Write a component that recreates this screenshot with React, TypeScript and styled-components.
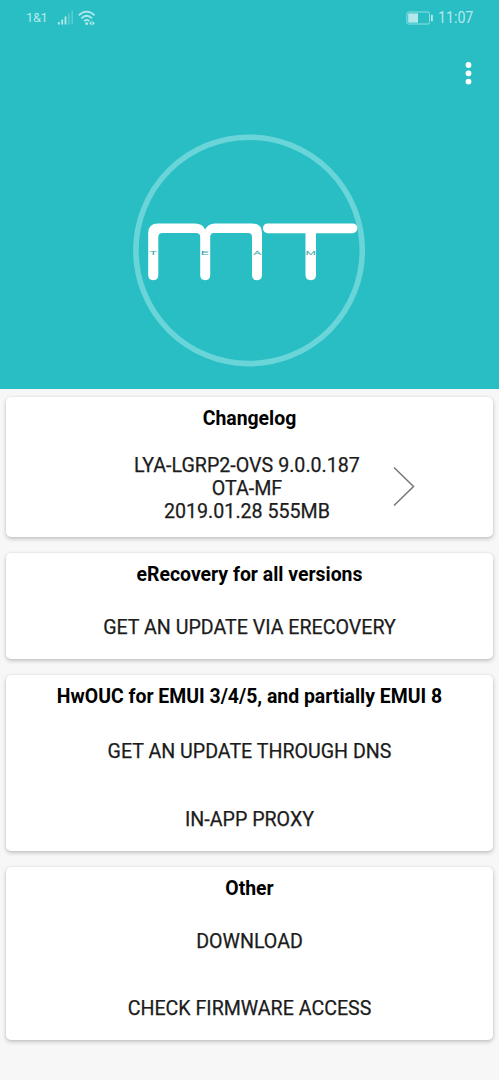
import React from 'react';
import styled, { createGlobalStyle } from 'styled-components';

const GlobalStyle = createGlobalStyle`
  * { box-sizing: border-box; }
  body {
    margin: 0;
    background: #f7f7f7;
    font-family: Roboto, "Liberation Sans", sans-serif;
  }
`;

const Screen = styled.main`
  display: flex;
  flex-direction: column;
  width: 499px;
  height: 1080px;
  overflow: hidden;
  background: #f7f7f7;
`;

const Hero = styled.header`
  display: flex;
  flex-direction: column;
  height: 389px;
  flex: none;
  background: #28bec4;
`;

const StatusBar = styled.div`
  display: flex;
  align-items: center;
  justify-content: space-between;
  height: 36px;
  padding: 0 26px 0 26px;
  color: #b4e9eb;
`;

const StatusGroup = styled.div`
  display: flex;
  align-items: center;
`;

const Carrier = styled.span`
  width: 32px;
  font-size: 12.8px;
  line-height: 16px;
  letter-spacing: -0.3px;
  white-space: nowrap;
`;

const Clock = styled.span`
  margin-left: 4px;
  width: 35px;
  font-size: 16.5px;
  font-weight: 400;
  line-height: 18px;
  white-space: nowrap;
  transform: scaleX(0.86);
  transform-origin: left center;
`;

const Toolbar = styled.div`
  display: flex;
  justify-content: flex-end;
  height: 74px;
  padding: 22px 20px 0 0;
`;

const MenuButton = styled.button`
  display: flex;
  width: 22px;
  height: 30px;
  padding: 0;
  border: 0;
  background: none;
`;

const LogoArea = styled.div`
  display: flex;
  justify-content: center;
  padding-top: 20px;
`;

const CardList = styled.div`
  display: flex;
  flex-direction: column;
  gap: 16px;
  padding: 8px 6px 0;
`;

const Card = styled.section<{ $height: number }>`
  display: flex;
  flex-direction: column;
  height: ${(p) => p.$height}px;
  padding-top: 10px;
  border-radius: 5px;
  background: #fff;
  box-shadow: 0 2px 4px rgba(0, 0, 0, 0.2), 0 0 3px rgba(0, 0, 0, 0.08);
`;

const Title = styled.h2`
  margin: 0;
  font-size: 19.42px;
  font-weight: 700;
  line-height: 23px;
  text-align: center;
  color: #000;
`;

const Action = styled.button<{ $top: number }>`
  margin: ${(p) => p.$top}px 0 0;
  padding: 0;
  border: 0;
  background: none;
  font: 400 19.62px/23px Roboto, "Liberation Sans", sans-serif;
  -webkit-text-stroke: 0.25px #1c1c1c;
  color: #1c1c1c;
  text-align: center;
`;

const ReleaseRow = styled.div`
  display: grid;
  grid-template-columns: 106px 270px auto;
  align-items: center;
  margin-top: 25px;
`;

const Release = styled.p`
  grid-column: 2;
  margin: 0;
  font-size: 19.65px;
  -webkit-text-stroke: 0.25px #1c1c1c;
  line-height: 22.8px;
  text-align: center;
  color: #1c1c1c;
`;

const Wifi = styled.svg`
  margin-left: 4px;
`;

const Chevron = styled.svg`
  margin: 0 0 4px 10px;
`;

const SignalIcon = () => (
  <svg width="16" height="16" viewBox="0 0 16 16" fill="#b4e9eb">
    <rect x="0" y="12" width="1.8" height="2.5" />
    <rect x="3.3" y="9.5" width="1.8" height="5" />
    <rect x="6.6" y="6.5" width="1.8" height="8" />
    <rect x="10" y="3.5" width="1.6" height="11" opacity=".35" />
    <rect x="13.4" y="0.5" width="1.6" height="14" opacity=".35" />
  </svg>
);

const WifiIcon = () => (
  <Wifi width="18" height="16" viewBox="0 0 18 16" fill="none" stroke="#b4e9eb" strokeWidth="1.7">
    <path d="M.8 5.3Q8.7-2.2 16.6 5.3M3.4 8.3Q8.7 3.2 14 8.3M6 11.2Q8.7 8.5 11.4 11.2" />
    <circle cx="8.7" cy="13.7" r="1.4" fill="#b4e9eb" stroke="none" />
    <path d="M13.4 11 11.2 13.2 13.4 15.4zM14.4 11 16.8 13.2 14.4 15.4z" fill="#b4e9eb" stroke="none" />
  </Wifi>
);

const BatteryIcon = () => (
  <svg width="28" height="14" viewBox="0 0 28 14">
    <rect x=".9" y="1" width="22.6" height="12" rx="1.5" fill="none" stroke="#8fdfe2" />
    <rect x="2.2" y="2.4" width="9.8" height="9.2" fill="#b4e9eb" />
    <rect x="25" y="3.7" width="1.8" height="6.6" rx=".5" fill="#b4e9eb" />
  </svg>
);

const MoreIcon = () => (
  <svg width="22" height="30" viewBox="0 0 22 30" fill="#fff">
    <circle cx="11.5" cy="7" r="2.9" />
    <circle cx="11.5" cy="15.3" r="2.9" />
    <circle cx="11.5" cy="23.6" r="2.9" />
  </svg>
);

const teamLetters = [
  { letter: 'T', x: 153.3, width: 8 },
  { letter: 'E', x: 204.8, width: 8.5 },
  { letter: 'A', x: 257.2, width: 8.5 },
  { letter: 'M', x: 310.8, width: 10.5 },
];

const Logo = () => (
  <svg width="239" height="240" viewBox="130 130 239 240">
    <circle cx="249.1" cy="250.4" r="113.2" fill="none" stroke="#69d5d9" strokeWidth="5.6" />
    <g fill="#fff">
      <path d="M148.2 275V233Q148.2 223.4 158 223.4H195Q202.5 223.4 205.2 229.5Q208 223.4 215 223.4H252Q262 223.4 262 233V275Q262 280.2 257 280.2Q252 280.2 252 275V237Q252 233 248 233H214Q210.2 233 210.2 237V275Q210.2 280.2 205.2 280.2Q200.2 280.2 200.2 275V237Q200.2 233 196 233H162.5Q158.3 233 158.3 237V275Q158.3 280.2 153.25 280.2Q148.2 280.2 148.2 275Z" />
      <rect x="263" y="223.4" width="94.3" height="9.8" rx="4.6" />
      <path d="M305.5 230H316V275Q316 280.2 310.75 280.2Q305.5 280.2 305.5 275Z" />
    </g>
    {teamLetters.map(({ letter, x, width }) => (
      <text
        key={letter}
        x={x - width / 2}
        y="254.8"
        fontFamily="Roboto, sans-serif"
        fontSize="6"
        fill="#3fa9ae"
        textLength={width}
        lengthAdjust="spacingAndGlyphs"
      >
        {letter}
      </text>
    ))}
  </svg>
);

const ChevronIcon = () => (
  <Chevron width="24" height="42" viewBox="0 0 24 42">
    <path d="M2 1.5 21.5 20.5 2 39.5" fill="none" stroke="#777b80" strokeWidth="1.6" />
  </Chevron>
);

export default function App() {
  return (
    <Screen>
      <GlobalStyle />
      <Hero>
        <StatusBar>
          <StatusGroup>
            <Carrier>1&amp;1</Carrier>
            <SignalIcon />
            <WifiIcon />
          </StatusGroup>
          <StatusGroup>
            <BatteryIcon />
            <Clock>11:07</Clock>
          </StatusGroup>
        </StatusBar>
        <Toolbar>
          <MenuButton aria-label="More options">
            <MoreIcon />
          </MenuButton>
        </Toolbar>
        <LogoArea>
          <Logo />
        </LogoArea>
      </Hero>
      <CardList>
        <Card $height={140}>
          <Title>Changelog</Title>
          <ReleaseRow>
            <Release>
              LYA-LGRP2-OVS 9.0.0.187
              <br />
              OTA-MF
              <br />
              2019.01.28 555MB
            </Release>
            <ChevronIcon />
          </ReleaseRow>
        </Card>
        <Card $height={106}>
          <Title>eRecovery for all versions</Title>
          <Action $top={30}>GET AN UPDATE VIA ERECOVERY</Action>
        </Card>
        <Card $height={176}>
          <Title>HwOUC for EMUI 3/4/5, and partially EMUI 8</Title>
          <Action $top={32}>GET AN UPDATE THROUGH DNS</Action>
          <Action $top={45}>IN-APP PROXY</Action>
        </Card>
        <Card $height={173}>
          <Title>Other</Title>
          <Action $top={30}>DOWNLOAD</Action>
          <Action $top={44}>CHECK FIRMWARE ACCESS</Action>
        </Card>
      </CardList>
    </Screen>
  );
}
